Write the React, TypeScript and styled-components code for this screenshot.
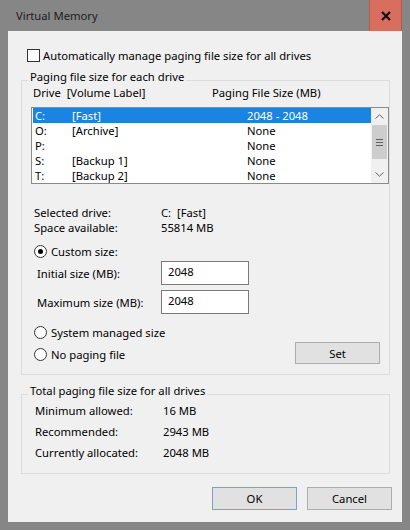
import { Fragment } from "react";
import styled, { createGlobalStyle } from "styled-components";

const GlobalStyle = createGlobalStyle`
  html, body {
    margin: 0;
    padding: 0;
    background: #868686;
  }
  body {
    font-family: "Noto Sans", "Open Sans", sans-serif;
    font-size: 11.25px;
    color: #000;
  }
`;

const Window = styled.div`
  width: 410px;
  height: 530px;
  background: #868686;
  display: flex;
  flex-direction: column;
  box-sizing: border-box;
  padding-bottom: 8px;
`;

const TitleBar = styled.div`
  height: 31px;
  flex: none;
  display: flex;
  align-items: stretch;
  justify-content: space-between;
  padding: 0 8px 0 16px;
`;

const Title = styled.div`
  display: flex;
  align-items: center;
  color: #1c1c1c;
  font-size: 11.25px;
`;

const CloseButton = styled.div`
  width: 33px;
  display: flex;
  align-items: center;
  justify-content: center;
  background: #d96e5f;
  border-left: 1px solid #b25a4e;
  border-right: 1px solid #b25a4e;
  box-sizing: border-box;
`;

const Client = styled.div`
  flex: 1;
  margin: 0 8px;
  background: #f0f0f0;
  display: flex;
  flex-direction: column;
`;

const CheckRow = styled.label`
  display: flex;
  align-items: center;
  height: 13px;
  margin: 18px 0 0 19px;
  gap: 3px;
  line-height: 13px;
`;

const CheckBox = styled.span`
  width: 13px;
  height: 13px;
  box-sizing: border-box;
  border: 1px solid #333;
  background: #fff;
  flex: none;
`;

const Group = styled.fieldset<{ $top: number; $left: number; $bottom: number }>`
  margin: ${(p) => p.$top}px 12px 0 13px;
  padding: 0 0 ${(p) => p.$bottom}px ${(p) => p.$left}px;
  border: 1px solid #dcdcdc;
  min-width: 0;
`;

const Legend = styled.legend<{ $shift: number }>`
  padding: 0 2px;
  margin-left: ${(p) => p.$shift}px;
  line-height: 12px;
  position: relative;
  top: -3px;
`;

const HeaderRow = styled.div`
  display: flex;
  height: 14px;
  line-height: 14px;
  padding-left: 2px;
`;

const HeaderCell = styled.div<{ $width?: number }>`
  width: ${(p) => (p.$width ? `${p.$width}px` : "auto")};
`;

const ListBox = styled.div`
  margin-top: 7px;
  height: 77px;
  box-sizing: border-box;
  border: 1px solid #8a8a8a;
  background: #fff;
  display: flex;
`;

const Rows = styled.div`
  flex: 1;
  padding-left: 1px;
`;

const Row = styled.div<{ $selected?: boolean }>`
  display: flex;
  height: 15px;
  line-height: 15px;
  padding-left: 2px;
  background: ${(p) => (p.$selected ? "#1a84e3" : "transparent")};
  color: ${(p) => (p.$selected ? "#fff" : "#000")};
`;

const Cell = styled.div<{ $width?: number }>`
  width: ${(p) => (p.$width ? `${p.$width}px` : "auto")};
  white-space: nowrap;
`;

const ScrollBar = styled.div`
  width: 17px;
  flex: none;
  background: #f0f0f0;
  display: flex;
  flex-direction: column;
`;

const ScrollArrow = styled.div`
  height: 17px;
  display: flex;
  align-items: center;
  justify-content: center;
  flex: none;
`;

const ScrollTrack = styled.div`
  flex: 1;
`;

const ScrollThumb = styled.div`
  height: 34px;
  margin: 0 1px;
  background: #cdcdcd;
  display: flex;
  flex-direction: column;
  align-items: center;
  justify-content: center;
  gap: 2px;
`;

const Grip = styled.span`
  width: 7px;
  height: 1px;
  background: #606060;
`;

const InfoGrid = styled.div`
  display: grid;
  grid-template-columns: 127px auto;
  margin: 21px 0 0 3px;
  line-height: 15px;
`;

const RadioRow = styled.label`
  display: flex;
  align-items: center;
  gap: 4px;
  height: 15px;
  line-height: 15px;
`;

const Radio = styled.span<{ $checked?: boolean }>`
  width: 13px;
  height: 13px;
  box-sizing: border-box;
  border: 1px solid #333;
  border-radius: 50%;
  background: #fff;
  display: flex;
  align-items: center;
  justify-content: center;
  flex: none;

  &::after {
    content: "";
    width: 5px;
    height: 5px;
    border-radius: 50%;
    background: #000;
    display: ${(p) => (p.$checked ? "block" : "none")};
  }
`;

const CustomRow = styled(RadioRow)`
  margin: 9px 0 0 3px;
`;

const SizeRow = styled.div<{ $top: number }>`
  display: flex;
  align-items: center;
  margin: ${(p) => p.$top}px 0 0 6px;
  height: 24px;
`;

const SizeLabel = styled.div`
  width: 124px;
`;

const SizeInput = styled.div`
  width: 88px;
  height: 24px;
  box-sizing: border-box;
  border: 1px solid #7a7a7a;
  background: #fff;
  padding: 2px 0 0 6px;
  line-height: 16px;
`;

const ChoiceArea = styled.div`
  display: flex;
  justify-content: space-between;
  align-items: flex-start;
  margin: 11px 9px 0 3px;
`;

const ChoiceColumn = styled.div`
  display: flex;
  flex-direction: column;
  gap: 7px;
`;

const Button = styled.div<{ $default?: boolean }>`
  width: 85px;
  height: 23px;
  box-sizing: border-box;
  border: 1px solid ${(p) => (p.$default ? "#7d9fc8" : "#adadad")};
  background: #e1e1e1;
  display: flex;
  align-items: center;
  justify-content: center;
  line-height: 15px;
`;

const SetButton = styled(Button)`
  height: 22px;
  margin-top: 17px;
`;

const TotalGrid = styled.div`
  display: grid;
  grid-template-columns: 128px auto;
  grid-auto-rows: 21px;
  align-items: center;
  padding-left: 1px;
`;

const ButtonBar = styled.div`
  display: flex;
  justify-content: flex-end;
  gap: 10px;
  margin: 13px 10px 0 0;
`;

const drives = [
  { letter: "C:", label: "[Fast]", size: "2048 - 2048", selected: true },
  { letter: "O:", label: "[Archive]", size: "None" },
  { letter: "P:", label: "", size: "None" },
  { letter: "S:", label: "[Backup 1]", size: "None" },
  { letter: "T:", label: "[Backup 2]", size: "None" },
];

const totals = [
  ["Minimum allowed:", "16 MB"],
  ["Recommended:", "2943 MB"],
  ["Currently allocated:", "2048 MB"],
];

function Chevron({ up }: { up?: boolean }) {
  return (
    <svg width="9" height="5" viewBox="0 0 9 5">
      <path
        d={up ? "M0.5 4.5 L4.5 0.8 L8.5 4.5" : "M0.5 0.5 L4.5 4.2 L8.5 0.5"}
        fill="none"
        stroke="#606060"
        strokeWidth="1"
      />
    </svg>
  );
}

export default function App() {
  return (
    <>
      <GlobalStyle />
      <Window>
        <TitleBar>
          <Title>Virtual Memory</Title>
          <CloseButton>
            <svg width="10" height="10" viewBox="0 0 10 10">
              <path d="M1 1 L9 9 M9 1 L1 9" stroke="#111" strokeWidth="2.2" />
            </svg>
          </CloseButton>
        </TitleBar>
        <Client>
          <CheckRow>
            <CheckBox />
            Automatically manage paging file size for all drives
          </CheckRow>

          <Group $top={12} $left={9} $bottom={10}>
            <Legend $shift={-3}>Paging file size for each drive</Legend>
            <HeaderRow>
              <HeaderCell $width={179}>Drive&nbsp; [Volume Label]</HeaderCell>
              <HeaderCell>Paging File Size (MB)</HeaderCell>
            </HeaderRow>
            <ListBox>
              <Rows>
                {drives.map((d) => (
                  <Row key={d.letter} $selected={d.selected}>
                    <Cell $width={37}>{d.letter}</Cell>
                    <Cell $width={175}>{d.label}</Cell>
                    <Cell>{d.size}</Cell>
                  </Row>
                ))}
              </Rows>
              <ScrollBar>
                <ScrollArrow>
                  <Chevron up />
                </ScrollArrow>
                <ScrollTrack>
                  <ScrollThumb>
                    <Grip />
                    <Grip />
                    <Grip />
                  </ScrollThumb>
                </ScrollTrack>
                <ScrollArrow>
                  <Chevron />
                </ScrollArrow>
              </ScrollBar>
            </ListBox>

            <InfoGrid>
              <div>Selected drive:</div>
              <div>C:&nbsp; [Fast]</div>
              <div>Space available:</div>
              <div>55814 MB</div>
            </InfoGrid>

            <CustomRow>
              <Radio $checked />
              Custom size:
            </CustomRow>
            <SizeRow $top={2}>
              <SizeLabel>Initial size (MB):</SizeLabel>
              <SizeInput>2048</SizeInput>
            </SizeRow>
            <SizeRow $top={5}>
              <SizeLabel>Maximum size (MB):</SizeLabel>
              <SizeInput>2048</SizeInput>
            </SizeRow>

            <ChoiceArea>
              <ChoiceColumn>
                <RadioRow>
                  <Radio />
                  System managed size
                </RadioRow>
                <RadioRow>
                  <Radio />
                  No paging file
                </RadioRow>
              </ChoiceColumn>
              <SetButton>Set</SetButton>
            </ChoiceArea>
          </Group>

          <Group $top={13} $left={12} $bottom={10}>
            <Legend $shift={-6}>Total paging file size for all drives</Legend>
            <TotalGrid>
              {totals.map(([label, value]) => (
                <Fragment key={label}>
                  <div>{label}</div>
                  <div>{value}</div>
                </Fragment>
              ))}
            </TotalGrid>
          </Group>

          <ButtonBar>
            <Button $default>OK</Button>
            <Button>Cancel</Button>
          </ButtonBar>
        </Client>
      </Window>
    </>
  );
}
